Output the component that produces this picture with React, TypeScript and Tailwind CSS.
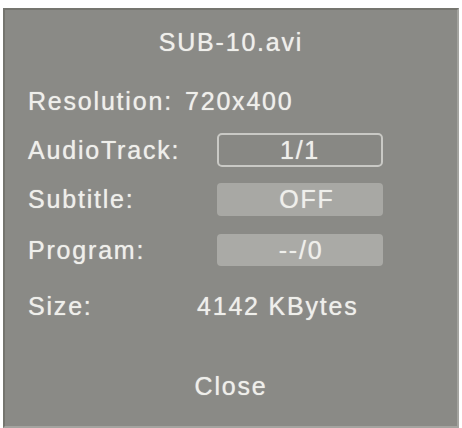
import React from "react";

const font = { fontFamily: '"Liberation Sans", Arial, sans-serif' };

function Row({ label, children, labelW = "w-[189px]", mt }: { label: string; children: React.ReactNode; labelW?: string; mt: string }) {
  return (
    <div className={`flex items-center h-[34px] ${mt}`}>
      <div className={`${labelW} shrink-0`}>{label}</div>
      {children}
    </div>
  );
}

export default function App() {
  return (
    <div className="w-[462px] h-[428px] bg-white pt-[8px] pl-[3px] pr-[3px] overflow-hidden" style={font}>
      <div className="h-[420px] bg-[#8a8a86] border-t-2 border-l-2 border-r-2 border-b-2 border-t-[#75756f] border-l-[#75756f] border-r-[#a4a4a0] border-b-[#a4a4a0] text-[25px] text-[#efefeb] tracking-[1.8px] leading-none pl-[23px] flex flex-col [text-shadow:0_0_1px_rgba(239,239,235,0.8)]">
        <div className="h-[34px] mt-[15px] flex items-center justify-center -ml-[23px]">SUB-10.avi</div>
        <Row label="Resolution:" labelW="w-[157px]" mt="mt-[25px]">
          <span>720x400</span>
        </Row>
        <Row label="AudioTrack:" mt="mt-[15px]">
          <div className="w-[166px] h-[34px] rounded-[5px] border-2 border-[#c9c9c5] bg-[#888884] flex items-center justify-center">1/1</div>
        </Row>
        <Row label="Subtitle:" mt="mt-[15px]">
          <div className="w-[166px] h-[33px] rounded-[4px] bg-[#a8a8a4] flex items-center justify-center pl-[14px]">OFF</div>
        </Row>
        <Row label="Program:" mt="mt-[17px]">
          <div className="w-[166px] h-[32px] rounded-[4px] bg-[#aaaaa6] flex items-center justify-center pl-[2px]">--/0</div>
        </Row>
        <Row label="Size:" labelW="w-[169px]" mt="mt-[22px]">
          <span>4142 KBytes</span>
        </Row>
        <div className="h-[34px] mt-[46px] flex items-center justify-center -ml-[23px]">Close</div>
      </div>
    </div>
  );
}
